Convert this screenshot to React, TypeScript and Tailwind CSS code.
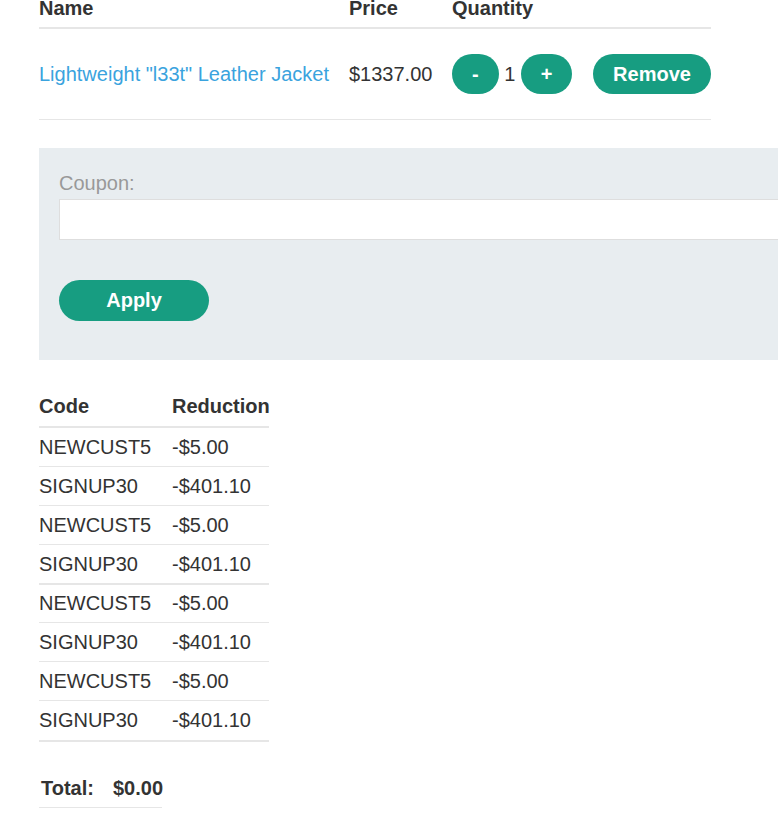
const coupons = [
  { code: "NEWCUST5", amount: "-$5.00", h: "h-[39px] border-b" },
  { code: "SIGNUP30", amount: "-$401.10", h: "h-[39px] border-b" },
  { code: "NEWCUST5", amount: "-$5.00", h: "h-[39px] border-b" },
  { code: "SIGNUP30", amount: "-$401.10", h: "h-[40px] border-b-2" },
  { code: "NEWCUST5", amount: "-$5.00", h: "h-[38px] border-b" },
  { code: "SIGNUP30", amount: "-$401.10", h: "h-[39px] border-b" },
  { code: "NEWCUST5", amount: "-$5.00", h: "h-[39px] border-b" },
  { code: "SIGNUP30", amount: "-$401.10", h: "h-[41px] border-b-2" },
];

const CartRow = () => (
  <div className="grid grid-cols-[310px_103px_141px_118px] h-[91px] items-center border-b border-[#e6e6e6]">
    <a href="#" className="text-[#3aa3de]">
      Lightweight "l33t" Leather Jacket
    </a>
    <span>$1337.00</span>
    <div className="flex items-center">
      <button className="h-[40px] px-5 rounded-full bg-[#179d81] text-white font-bold">
        -
      </button>
      <span className="mx-[5.5px]">1</span>
      <button className="h-[40px] px-5 rounded-full bg-[#179d81] text-white font-bold">
        +
      </button>
    </div>
    <button className="h-[40px] px-5 rounded-full bg-[#179d81] text-white font-bold">
      Remove
    </button>
  </div>
);

export default function App() {
  return (
    <div className="w-full min-h-[818px] overflow-hidden bg-white font-['Liberation_Sans',Arial,sans-serif] text-[20px] leading-[23px] text-[#333]">
      {/* cart */}
      <div className="ml-[39px] w-[672px]">
        <div className="grid grid-cols-[310px_103px_141px_118px] leading-[16px] pb-[11px] border-b-2 border-[#e6e6e6] font-bold">
          <span>Name</span>
          <span>Price</span>
          <span>Quantity</span>
          <span></span>
        </div>
        <CartRow />
      </div>

      {/* coupon form */}
      <div className="mt-[28px] ml-[39px] w-[800px] bg-[#e8edf0] pt-[24px] pb-[39px] px-5">
        <label className="block mb-1 text-[#999]">Coupon:</label>
        <input
          type="text"
          className="block w-full h-[41px] bg-white border border-[#dedede] outline-none"
        />
        <button className="block mt-[40px] h-[41px] w-[150px] rounded-full bg-[#179d81] text-white font-bold">
          Apply
        </button>
      </div>

      {/* applied coupons */}
      <div className="mt-[35px] ml-[39px] w-[230px]">
        <div className="grid grid-cols-[133px_97px] pb-2 border-b-2 border-[#e6e6e6] font-bold">
          <span>Code</span>
          <span>Reduction</span>
        </div>
        {coupons.map((c, i) => (
          <div
            key={i}
            className={`grid grid-cols-[133px_97px] items-center border-[#e6e6e6] ${c.h}`}
          >
            <span>{c.code}</span>
            <span>{c.amount}</span>
          </div>
        ))}
      </div>

      {/* total */}
      <div className="mt-[35px] ml-[39px] w-[123px] grid grid-cols-[74px_49px] font-bold pb-[7px] border-b border-[#e6e6e6]">
        <span className="pl-[2px]">Total:</span>
        <span>$0.00</span>
      </div>
    </div>
  );
}
